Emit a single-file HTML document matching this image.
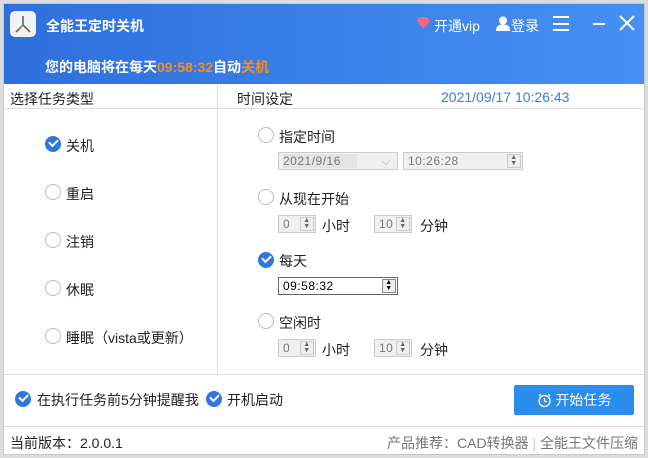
<!DOCTYPE html>
<html><head><meta charset="utf-8"><style>
*{margin:0;padding:0;box-sizing:border-box}
body{width:648px;height:458px;background:#dcdcdc;font-family:"Liberation Sans","Noto Sans CJK SC",sans-serif;font-size:14px;color:#222;position:relative;overflow:hidden}
.win{position:absolute;left:3px;top:3px;width:642px;height:452px;background:#fff;border:1px solid #c8c8c8}
.hd{position:absolute;left:0;top:0;width:640px;height:80px;background:linear-gradient(90deg,#2f6fdc,#4690f4)}
.a{position:absolute;white-space:nowrap}
.w{color:#fff}
.chk{position:absolute;width:16px;height:16px;border-radius:50%;background:#2f76e0}
.chk:after{content:"";position:absolute;left:4px;top:3px;width:7px;height:4px;border-left:2px solid #fff;border-bottom:2px solid #fff;transform:rotate(-45deg)}
.rad{position:absolute;width:16px;height:16px;border-radius:50%;border:1px solid #bbb;background:#fff}
.box{position:absolute;border:1px solid #ccc;background:#f0f0f0;font-size:12px;color:#777;padding:2px 4px;height:18px;line-height:13px;font-family:"Liberation Sans",sans-serif;letter-spacing:0.5px}
.sp{position:absolute;right:1px;top:1px;width:14px;height:14px;border:1px solid #ccc;background:#eee;font-size:7px;line-height:6px;text-align:center;color:#666}
</style></head><body>
<div class="win">
<div class="hd">
 <div class="a" style="left:6px;top:7px;width:26px;height:26px;background:#f2f2f2;border-radius:5px">
  <svg width="26" height="26"><path d="M13 5 L13 14 L6 21 M13 14 L20 21" stroke="#555" stroke-width="1.5" fill="none"/><path d="M13 14 L8 20" stroke="#e66" stroke-width="1"/></svg></div>
 <div class="a w" style="left:42px;top:12px;font-size:14px;font-weight:bold">全能王定时关机</div>
 <div class="a" style="left:413px;top:13px;width:13px;height:12px;background:#f26a7a;clip-path:polygon(20% 0,80% 0,100% 35%,50% 100%,0 35%)"></div>
 <div class="a w" style="left:430px;top:12px;font-size:14px">开通vip</div>
 <svg class="a" style="left:492px;top:12px" width="14" height="15"><circle cx="7" cy="4.5" r="4" fill="#fff"/><path d="M0 15 Q0 8 7 8.5 Q14 8 14 15Z" fill="#fff"/></svg>
 <div class="a w" style="left:507px;top:12px;font-size:14px">登录</div>
 <div class="a" style="left:549px;top:12px;width:16px;height:15px;border-top:2px solid #fff;border-bottom:2px solid #fff"><div style="margin-top:4.5px;height:2px;background:#fff"></div></div>
 <div class="a" style="left:589px;top:19px;width:12px;height:2px;background:#fff"></div>
 <svg class="a" style="left:615px;top:11px" width="16" height="16"><path d="M1 1L15 15M15 1L1 15" stroke="#fff" stroke-width="2"/></svg>
 <div class="a w" style="left:41px;top:53px;font-size:14px;font-weight:bold">您的电脑将在每天<span style="color:#ff8a1c">09:58:32</span>自动<span style="color:#ff8a1c">关机</span></div>
</div>
<div class="a" style="left:6px;top:85px">选择任务类型</div>
<div class="a" style="left:233px;top:85px">时间设定</div>
<div class="a" style="left:437px;top:85px;color:#3a7fd6">2021/09/17 10:26:43</div>
<div class="a" style="left:0;top:104px;width:640px;height:1px;background:#ddd"></div>
<div class="a" style="left:213px;top:81px;width:1px;height:289px;background:#ddd"></div>
<div class="chk" style="left:41px;top:132px"></div><div class="a" style="left:62px;top:132px">关机</div>
<div class="rad" style="left:41px;top:180px"></div><div class="a" style="left:62px;top:180px">重启</div>
<div class="rad" style="left:41px;top:228px"></div><div class="a" style="left:62px;top:228px">注销</div>
<div class="rad" style="left:41px;top:276px"></div><div class="a" style="left:62px;top:276px">休眠</div>
<div class="rad" style="left:41px;top:324px"></div><div class="a" style="left:62px;top:324px">睡眠（vista或更新）</div>

<div class="rad" style="left:254px;top:123px"></div><div class="a" style="left:275px;top:123px">指定时间</div>
<div class="box" style="left:274px;top:148px;width:120px"><span style="background:#e4e4e4;padding-right:16px">2021/9/16</span><span style="position:absolute;right:6px;color:#aaa">⌵</span></div>
<div class="box" style="left:399px;top:148px;width:120px">10:26:28<div class="sp">▲<br>▼</div></div>
<div class="rad" style="left:254px;top:185px"></div><div class="a" style="left:275px;top:185px">从现在开始</div>
<div class="box" style="left:274px;top:211px;width:38px">0<div class="sp">▲<br>▼</div></div><div class="a" style="left:318px;top:212px">小时</div>
<div class="box" style="left:370px;top:211px;width:38px">10<div class="sp">▲<br>▼</div></div><div class="a" style="left:416px;top:212px">分钟</div>
<div class="chk" style="left:254px;top:248px"></div><div class="a" style="left:275px;top:247px">每天</div>
<div class="box" style="left:274px;top:273px;width:120px;background:#fff;border-color:#666;color:#000">09:58:32<div class="sp" style="border-color:#888;color:#000">▲<br>▼</div></div>
<div class="rad" style="left:254px;top:309px"></div><div class="a" style="left:275px;top:309px">空闲时</div>
<div class="box" style="left:274px;top:335px;width:38px">0<div class="sp">▲<br>▼</div></div><div class="a" style="left:318px;top:336px">小时</div>
<div class="box" style="left:370px;top:335px;width:38px">10<div class="sp">▲<br>▼</div></div><div class="a" style="left:416px;top:336px">分钟</div>

<div class="a" style="left:0;top:370px;width:640px;height:1px;background:#ddd"></div>
<div class="chk" style="left:11px;top:387px"></div><div class="a" style="left:33px;top:386px">在执行任务前5分钟提醒我</div>
<div class="chk" style="left:202px;top:387px"></div><div class="a" style="left:223px;top:386px">开机启动</div>
<div class="a" style="left:510px;top:381px;width:120px;height:30px;background:#2a8ceb;border-radius:2px;color:#fff;text-align:center;line-height:30px">
 <svg style="vertical-align:-3px" width="15" height="15"><circle cx="7.5" cy="8" r="5.5" stroke="#fff" stroke-width="1.3" fill="none"/><path d="M7.5 5V8.5H10M2 3L4 1M13 3L11 1" stroke="#fff" stroke-width="1.3" fill="none"/></svg> 开始任务</div>
<div class="a" style="left:0;top:422px;width:640px;height:1px;background:#ddd"></div>
<div class="a" style="left:6px;top:429px">当前版本：2.0.0.1</div>
<div class="a" style="left:383px;top:429px;color:#777">产品推荐：CAD转换器<span style="color:#ccc"> | </span>全能王文件压缩</div>
</div>
</body></html>
